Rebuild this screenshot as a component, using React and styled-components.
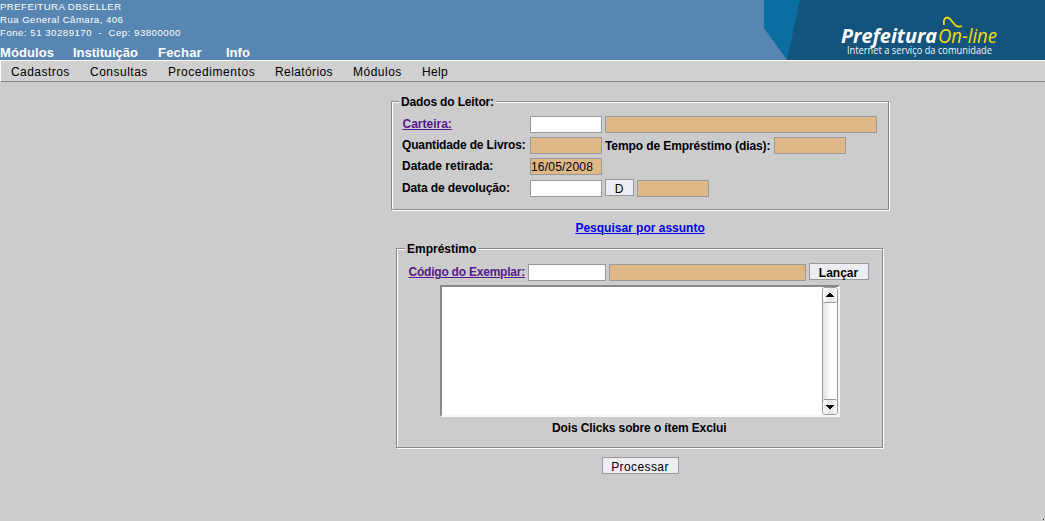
import React from "react";
import styled, { createGlobalStyle } from "styled-components";

const GlobalStyle = createGlobalStyle`
  * { box-sizing: border-box; }
  body {
    margin: 0;
    background: #ccc;
    color: #000;
    font: 12px/14px "Liberation Sans", Arial, sans-serif;
    overflow: hidden;
  }
`;

const Page = styled.div`
  display: flex;
  flex-direction: column;
  height: 521px;
`;

const Header = styled.header`
  display: flex;
  justify-content: space-between;
  height: 60px;
  background: #5786b2;
  color: #fff;
`;

const HeaderLeft = styled.div`
  display: flex;
  flex-direction: column;
  justify-content: space-between;
`;

const Address = styled.div`
  font-size: 9.6px;
  line-height: 13px;
  white-space: pre;
`;

const Line = styled.div`
  letter-spacing: ${(p) => p.$spacing}px;
`;

const Modules = styled.nav`
  display: flex;
  font-size: 13px;
  font-weight: bold;
  line-height: 15px;
`;

const MenuItem = styled.span`
  flex: none;
  width: ${(p) => p.$width}px;
  letter-spacing: ${(p) => p.$spacing}px;
  white-space: nowrap;
`;

const MenuBar = styled.nav`
  display: flex;
  flex: none;
  height: 22px;
  padding: 4px 0 0 10px;
  line-height: 15px;
  background: #d0d0d0;
  border: solid;
  border-width: 1px 0 1px 1px;
  border-color: #fff #fff #888 #fff;
`;

const Main = styled.main`
  position: relative;
  display: flex;
  flex: 1;
  flex-direction: column;
  align-items: flex-start;
  padding: 19px 0 0 391px;
`;

const Panel = styled.section`
  display: flex;
  flex: none;
  flex-direction: column;
  width: ${(p) => p.$width}px;
  height: ${(p) => p.$height}px;
  margin-left: ${(p) => p.$indent || 0}px;
  padding: 0 0 0 10px;
  border: 1px solid #888;
  box-shadow: inset -1px -1px 0 #888, inset 1px 1px 0 #fff;
  border-right-color: #fff;
  border-bottom-color: #fff;
`;

const Legend = styled.h2`
  align-self: flex-start;
  flex: none;
  height: 14px;
  margin: -7px 0 0 ${(p) => p.$offset ?? -3}px;
  padding: 0 2px;
  background: #ccc;
  font: inherit;
  font-weight: bold;
  letter-spacing: ${(p) => p.$spacing || 0}px;
  white-space: nowrap;
`;

const Row = styled.div`
  display: flex;
  flex: none;
  align-items: flex-start;
  height: 17px;
  margin-top: ${(p) => p.$top}px;
`;

const Label = styled.span`
  flex: none;
  width: ${(p) => p.$width}px;
  margin-top: ${(p) => p.$top ?? 1}px;
  padding-left: ${(p) => p.$inset || 0}px;
  font-weight: bold;
  letter-spacing: ${(p) => p.$spacing || 0}px;
  white-space: nowrap;
`;

const Link = styled.a`
  color: ${(p) => (p.$visited ? "#551a8b" : "#00e")};
  text-decoration: underline;
  text-underline-offset: 1px;
  text-decoration-thickness: 1px;
`;

const Field = styled.div`
  flex: none;
  width: ${(p) => p.$width}px;
  height: 17px;
  margin-right: 3px;
  padding: 1px 0 0;
  border: 1px solid #999;
  background: ${(p) => (p.$readOnly ? "#deb887" : "#fff")};
  letter-spacing: 0.2px;
`;

const Button = styled.button`
  flex: none;
  width: ${(p) => p.$width}px;
  height: 17px;
  margin: ${(p) => (p.$raised ? "-1px" : "0")} 3px 0 0;
  padding: 3px 1px 0 0;
  border: 1px solid #999;
  background: #eceef3;
  color: #000;
  font: inherit;
  line-height: 12px;
  font-weight: ${(p) => (p.$bold ? "bold" : "normal")};
  letter-spacing: ${(p) => p.$spacing || 0}px;
`;

const SearchLine = styled.div`
  height: 14px;
  margin: 10px 0 13px 184.4px;
  font-weight: bold;
  white-space: nowrap;
`;

const ListBox = styled.div`
  display: flex;
  flex: none;
  justify-content: flex-end;
  width: 400px;
  height: 132px;
  margin: 4px 0 4px 33px;
  border: 2px solid;
  border-color: #888 #f6f6f6 #f6f6f6 #888;
  background: #fff;
`;

const ScrollBar = styled.div`
  display: flex;
  flex-direction: column;
  justify-content: space-between;
  width: 16px;
  border: 1px solid #999;
  border-radius: 3px;
  background: linear-gradient(90deg, #e2e2e6, #fff 55%);
`;

const ScrollButton = styled.div`
  display: flex;
  align-items: center;
  justify-content: center;
  height: 15px;
  border: 0 solid #999;
  border-width: ${(p) => (p.$down ? "1px 0 0" : "0 0 1px")};
  border-radius: 2px;
  background: linear-gradient(90deg, #fff, #e4e4e4 55%, #fff);
`;

const Hint = styled.div`
  height: 14px;
  margin-left: 145px;
  font-weight: bold;
  letter-spacing: -0.12px;
  white-space: nowrap;
`;

const Submit = styled.div`
  margin: 8px 0 0 211px;
`;

const Corner = styled.div`
  position: absolute;
  right: 1px;
  bottom: 1px;
  width: 1px;
  height: 1px;
  background: #222;
`;

function Logo() {
  return (
    <svg width="281" height="60" viewBox="0 0 281 60">
      <rect width="281" height="60" fill="#13537c" />
      <path d="M0 0H36L23 60L0 28Z" fill="#0a6fa0" />
      <path d="M0 28L23 60H0Z" fill="#5786b2" />
      <g fontFamily="'Open Sans', 'Noto Sans', sans-serif">
        <text x="77" y="43" fontSize="19" fontStyle="italic" fontWeight="700" fill="#fff" textLength="96" lengthAdjust="spacingAndGlyphs">Prefeitura</text>
        <text x="174" y="43.3" fontSize="20.5" fontStyle="italic" fill="#f5dc00" textLength="59" lengthAdjust="spacingAndGlyphs">On-line</text>
        <text x="83" y="54.4" fontSize="10" fontWeight="500" fill="#f0f7fa" textLength="145" lengthAdjust="spacingAndGlyphs">Internet a serviço da comunidade</text>
      </g>
      <path d="M180 25C179 18 183 15 187 20C191 25 192 28 198 26" fill="none" stroke="#f5dc00" strokeWidth="1.8" />
    </svg>
  );
}

function Arrow({ down }) {
  return (
    <svg width="8" height="4" viewBox="0 0 8 4" shapeRendering="crispEdges">
      <path d={down ? "M0 0H8V1H7V2H6V3H5V4H3V3H2V2H1V1H0Z" : "M3 0H5V1H6V2H7V3H8V4H0V3H1V2H2V1H3Z"} />
    </svg>
  );
}

const modules = [["Módulos", 73, 0.1], ["Instituição", 85, 0], ["Fechar", 68, 0.2], ["Info", 30, 0]];
const menus = [["Cadastros", 79, 0.45], ["Consultas", 78, 0.5], ["Procedimentos", 107, 0.55], ["Relatórios", 78, 0.4], ["Módulos", 69, 0.5], ["Help", 40, 0.3]];

export default function App() {
  return (
    <Page>
      <GlobalStyle />
      <Header>
        <HeaderLeft>
          <Address>
            <Line $spacing={0.45}>PREFEITURA DBSELLER</Line>
            <Line $spacing={0.47}>Rua General Câmara, 406</Line>
            <Line $spacing={0.52}>{"Fone: 51 30289170  -  Cep: 93800000"}</Line>
          </Address>
          <Modules>
            {modules.map(([name, width, spacing]) => (
              <MenuItem key={name} $width={width} $spacing={spacing}>{name}</MenuItem>
            ))}
          </Modules>
        </HeaderLeft>
        <Logo />
      </Header>
      <MenuBar>
        {menus.map(([name, width, spacing]) => (
          <MenuItem key={name} $width={width} $spacing={spacing}>{name}</MenuItem>
        ))}
      </MenuBar>
      <Main>
        <Panel $width={499} $height={110}>
          <Legend $spacing={-0.15}>Dados do Leitor:</Legend>
          <Row $top={7}>
            <Label $width={128} $inset={0.5}><Link $visited>Carteira:</Link></Label>
            <Field $width={72} />
            <Field $width={272} $readOnly />
          </Row>
          <Row $top={4}>
            <Label $width={128} $spacing={-0.15}>Quantidade de Livros:</Label>
            <Field $width={72} $readOnly />
            <Label $width={169} $top={2} $spacing={-0.09}>Tempo de Empréstimo (dias):</Label>
            <Field $width={72} $readOnly />
          </Row>
          <Row $top={4}>
            <Label $width={128}>Datade retirada:</Label>
            <Field $width={72} $readOnly>16/05/2008</Field>
          </Row>
          <Row $top={5}>
            <Label $width={128} $spacing={-0.12}>Data de devolução:</Label>
            <Field $width={72} />
            <Button $width={29} $raised>D</Button>
            <Field $width={72} $readOnly />
          </Row>
        </Panel>
        <SearchLine><Link>Pesquisar por assunto</Link></SearchLine>
        <Panel $width={488} $height={201} $indent={5}>
          <Legend $offset={-2}>Empréstimo</Legend>
          <Row $top={8}>
            <Label $width={121} $inset={1.5} $spacing={-0.22}><Link $visited>Código do Exemplar:</Link></Label>
            <Field $width={78} />
            <Field $width={197} $readOnly />
            <Button $width={60} $raised $bold>Lançar</Button>
          </Row>
          <ListBox>
            <ScrollBar>
              <ScrollButton><Arrow /></ScrollButton>
              <ScrollButton $down><Arrow down /></ScrollButton>
            </ScrollBar>
          </ListBox>
          <Hint>Dois Clicks sobre o ítem Exclui</Hint>
        </Panel>
        <Submit>
          <Button $width={77} $spacing={0.4}>Processar</Button>
        </Submit>
        <Corner />
      </Main>
    </Page>
  );
}
